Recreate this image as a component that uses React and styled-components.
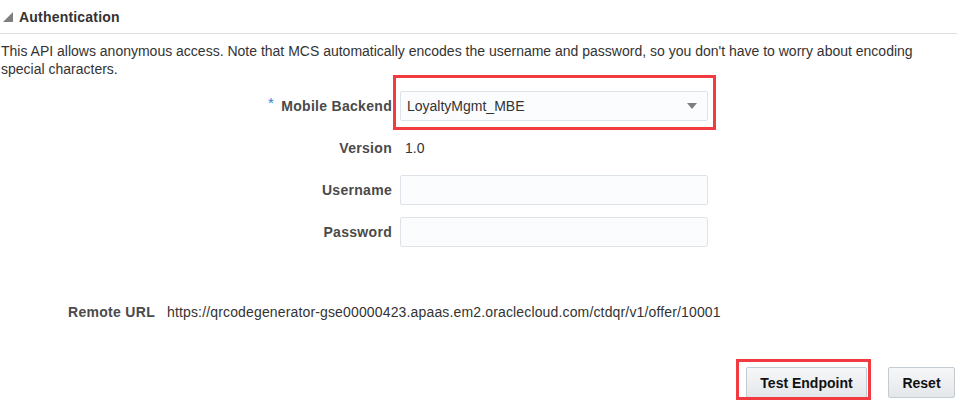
import React from "react";
import styled, { createGlobalStyle } from "styled-components";

const Global = createGlobalStyle`
  html, body { margin: 0; padding: 0; background: #fff; }
  body {
    font-family: "Liberation Sans", Arial, sans-serif;
    font-size: 14px;
    color: #333;
  }
  * { box-sizing: border-box; }
`;

const Page = styled.div`
  width: 959px;
  height: 403px;
  overflow: hidden;
`;

const SectionHeader = styled.div`
  height: 34px;
  display: flex;
  align-items: center;
  gap: 6px;
  padding-left: 3px;
  border-bottom: 1px solid #dcdfe3;
  margin-right: 2px;
`;

const Disclosure = styled.svg`
  width: 10px;
  height: 10px;
  flex: none;
`;

const SectionTitle = styled.span`
  font-weight: bold;
  font-size: 14px;
  letter-spacing: 0.2px;
  color: #333;
`;

const Intro = styled.p`
  margin: 8px 0 0 1px;
  line-height: 18px;
  font-size: 14px;
  color: #333;
`;

const FormGrid = styled.div`
  margin-top: 13px;
  display: grid;
  grid-template-columns: 392px 308px;
  column-gap: 8px;
  row-gap: 12px;
  grid-auto-rows: 30px;
`;

const Label = styled.label`
  display: flex;
  align-items: center;
  justify-content: flex-end;
  font-weight: bold;
  font-size: 14px;
  letter-spacing: 0.3px;
  color: #4a4a4a;
  white-space: nowrap;
`;

const Required = styled.span`
  color: #2f80d8;
  font-weight: normal;
  font-size: 15px;
  position: relative;
  top: -4px;
  margin-right: 7px;
`;

const FieldCell = styled.div`
  position: relative;
  display: flex;
  align-items: center;
`;

const Highlight = styled.div`
  position: absolute;
  top: ${(p) => p.$top}px;
  left: ${(p) => p.$left}px;
  right: ${(p) => p.$right}px;
  bottom: ${(p) => p.$bottom}px;
  border: 3px solid #f23b40;
  pointer-events: none;
`;

const SelectBox = styled.div`
  width: 100%;
  height: 30px;
  display: flex;
  align-items: center;
  justify-content: space-between;
  padding: 0 10px 0 6px;
  background: #fbfcfd;
  border: 1px solid #dde3e9;
  border-radius: 2px;
  font-size: 14px;
  color: #333;
`;

const Caret = styled.svg`
  width: 10px;
  height: 6px;
`;

const TextInput = styled.input`
  width: 100%;
  height: 30px;
  background: #fbfcfd;
  border: 1px solid #dde3e9;
  border-radius: 2px;
  font: inherit;
  padding: 0 6px;
  outline: none;
`;

const Value = styled.span`
  padding-left: 5px;
  font-size: 14px;
  color: #333;
`;

const UrlRow = styled.div`
  margin-top: 56px;
  padding-left: 68px;
  display: flex;
  gap: 12px;
  line-height: 18px;
`;

const UrlLabel = styled.span`
  font-weight: bold;
  letter-spacing: 0.3px;
  color: #4a4a4a;
`;

const UrlValue = styled.span`
  color: #333;
  letter-spacing: 0.15px;
`;

const ButtonBar = styled.div`
  margin-top: 46px;
  padding-right: 4px;
  display: flex;
  justify-content: flex-end;
  gap: 21px;
`;

const ButtonWrap = styled.div`
  position: relative;
`;

const Button = styled.button`
  height: 31px;
  width: ${(p) => p.$width}px;
  background: linear-gradient(#f6f7f8, #e4e7ea);
  border: 1px solid #c3cbd3;
  border-radius: 2px;
  font-family: "Liberation Sans", Arial, sans-serif;
  font-weight: bold;
  font-size: 14px;
  color: #111;
  padding: 0;
`;

export default function App() {
  return (
    <Page>
      <Global />
      <SectionHeader>
        <Disclosure viewBox="0 0 10 10">
          <polygon points="10,0 10,10 0,10" fill="#7f7f7f" />
        </Disclosure>
        <SectionTitle>Authentication</SectionTitle>
      </SectionHeader>
      <Intro>
        This API allows anonymous access. Note that MCS automatically encodes the
        username and password, so you don't have to worry about encoding special
        characters.
      </Intro>
      <FormGrid>
        <Label>
          <Required>*</Required>Mobile Backend
        </Label>
        <FieldCell>
          <SelectBox>
            <span>LoyaltyMgmt_MBE</span>
            <Caret viewBox="0 0 10 6">
              <polygon points="0,0 10,0 5,6" fill="#7b7f85" />
            </Caret>
          </SelectBox>
          <Highlight $top={-16} $left={-7} $right={-8} $bottom={-9} />
        </FieldCell>

        <Label>Version</Label>
        <FieldCell>
          <Value>1.0</Value>
        </FieldCell>

        <Label>Username</Label>
        <FieldCell>
          <TextInput type="text" />
        </FieldCell>

        <Label>Password</Label>
        <FieldCell>
          <TextInput type="password" />
        </FieldCell>
      </FormGrid>
      <UrlRow>
        <UrlLabel>Remote URL</UrlLabel>
        <UrlValue>
          https://qrcodegenerator-gse00000423.apaas.em2.oraclecloud.com/ctdqr/v1/offer/10001
        </UrlValue>
      </UrlRow>
      <ButtonBar>
        <ButtonWrap>
          <Button $width={121}>Test Endpoint</Button>
          <Highlight $top={-8} $left={-10} $right={-4} $bottom={-2} />
        </ButtonWrap>
        <ButtonWrap>
          <Button $width={67}>Reset</Button>
        </ButtonWrap>
      </ButtonBar>
    </Page>
  );
}
